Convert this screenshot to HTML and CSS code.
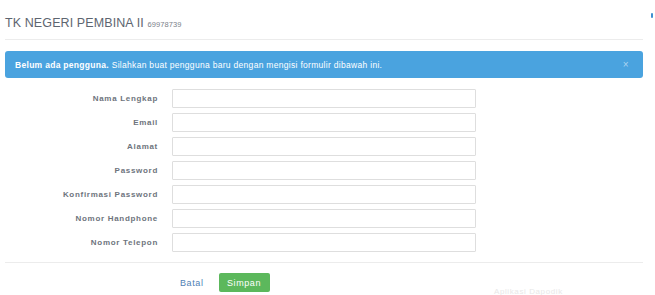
FILE: index.html
```html
<!DOCTYPE html>
<html>
<head>
<meta charset="utf-8">
<link rel="stylesheet" href="styles.css">
</head>
<body>
<div class="page">
  <div class="header">
    <h1 class="title">TK NEGERI PEMBINA II <small class="npsn">69978739</small></h1>
  </div>
  <div class="alert">
    <span class="alert-text"><b>Belum ada pengguna.</b> Silahkan buat pengguna baru dengan mengisi formulir dibawah ini.</span>
    <span class="close">×</span>
  </div>
  <form class="form">
    <div class="row"><label class="label">Nama Lengkap</label><input class="input" type="text"></div>
    <div class="row"><label class="label">Email</label><input class="input" type="text"></div>
    <div class="row"><label class="label">Alamat</label><input class="input" type="text"></div>
    <div class="row"><label class="label">Password</label><input class="input" type="password"></div>
    <div class="row"><label class="label">Konfirmasi Password</label><input class="input" type="password"></div>
    <div class="row"><label class="label">Nomor Handphone</label><input class="input" type="text"></div>
    <div class="row"><label class="label">Nomor Telepon</label><input class="input" type="text"></div>
  </form>
  <div class="footer">
    <a class="btn-link">Batal</a>
    <button class="btn-success" type="button">Simpan</button>
    <span class="credit">Aplikasi Dapodik</span>
  </div>
</div>
<div class="edge"></div>
</body>
</html>
```
FILE: styles.css
```css
html, body {
  margin: 0;
  padding: 0;
  background: #fff;
  font-family: "Liberation Sans", Arial, sans-serif;
  overflow: hidden;
}
.page {
  width: 638px;
  margin-left: 5px;
  height: 295px;
  position: relative;
}
.header {
  height: 40px;
  border-bottom: 1px solid #ececec;
  box-sizing: border-box;
  padding-top: 16px;
}
.title {
  margin: 0;
  font-size: 12.5px;
  font-weight: normal;
  color: #5d6570;
  letter-spacing: 0.1px;
  line-height: 14px;
}
.npsn {
  font-size: 7.5px;
  color: #7b818a;
}
.alert {
  margin-top: 11px;
  height: 27px;
  background: #4aa3df;
  border-radius: 3px;
  display: flex;
  align-items: center;
  justify-content: space-between;
  padding: 0 14px 0 10px;
  color: #fff;
  font-size: 8.5px;
  letter-spacing: 0.3px;
}
.alert-text b { font-weight: bold; }
.close {
  font-size: 10px;
  color: rgba(255,255,255,0.55);
}
.form {
  margin: 11px 0 0 0;
  display: flex;
  flex-direction: column;
  gap: 5px;
}
.row {
  display: flex;
  align-items: center;
  gap: 14px;
  height: 19px;
}
.label {
  width: 153px;
  text-align: right;
  font-size: 8px;
  font-weight: bold;
  color: #6e747d;
  letter-spacing: 0.7px;
}
.input {
  width: 304px;
  height: 19px;
  box-sizing: border-box;
  border: 1px solid #dedede;
  border-radius: 1px;
  margin: 0;
  padding: 0;
  background: #fff;
}
.footer {
  margin-top: 10px;
  border-top: 1px solid #ececec;
  padding-top: 10px;
  display: flex;
  align-items: center;
  padding-left: 175px;
  gap: 15px;
}
.btn-link {
  color: #4f7fb5;
  font-size: 9px;
  letter-spacing: 0.6px;
}
.btn-success {
  background: #5cb85c;
  border: none;
  color: #fff;
  font-family: "Liberation Sans", Arial, sans-serif;
  font-size: 9px;
  letter-spacing: 0.6px;
  width: 51px;
  height: 19px;
  border-radius: 2px;
  padding: 0;
}
.credit {
  position: absolute;
  left: 489px;
  top: 287px;
  font-size: 8px;
  letter-spacing: 0.6px;
  color: #e8e8e8;
}
.edge {
  position: absolute;
  left: 651px;
  top: 13px;
  width: 2px;
  height: 5px;
  background: #3e8fd0;
  border-radius: 1px;
}
```
